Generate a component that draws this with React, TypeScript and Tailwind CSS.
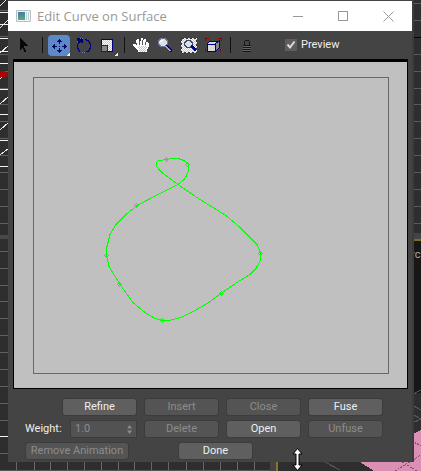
import type { ReactNode } from "react";

const leftLines = [10, 36, 54, 71, 88, 104, 121, 138, 155, 172, 189, 206, 223, 251, 268, 285, 301, 318, 335, 352, 369, 386, 403, 420, 453];
const whiteLines = [12, 24, 38, 51, 63, 89, 114, 140, 166, 436];
const rightLines = [3, 20, 54, 71, 88, 104, 121, 138, 155, 172, 189, 206, 223];
const bottomLines = [16, 34, 50, 67, 84, 101, 118, 134, 151, 168, 186, 203, 220, 237, 254];
const topLines = [17, 34, 50, 67, 84, 101, 118, 134, 151, 168, 185, 202, 219, 236, 253, 278, 295, 311, 328, 345, 362, 379, 396];

function Viewport() {
  return (
    <svg className="absolute inset-0 h-full w-full" viewBox="0 0 421 471" preserveAspectRatio="xMinYMin slice" shapeRendering="crispEdges" aria-hidden="true">
      <rect width="421" height="471" fill="#2e2e2e" />
      {topLines.map((x) => <rect key={x} x={x} width="1" height="1" fill="#555" />)}
      {leftLines.map((y) => <rect key={y} y={y} width="9" height="1" fill="#606060" />)}
      {whiteLines.map((y) => <rect key={y} y={y} width="9" height="1" fill="#f2f2f2" />)}
      <path d="M0 6 6 0M0 28 8 20M0 53 8 46M0 79 3 76M0 104 8 97M0 130 8 123M0 155 8 149" stroke="#e8e8e8" />
      <path d="M0 71h5v1h3v4H5v1H0z" fill="#b00000" />
      <rect y="235" width="9" height="4" fill="#484848" />
      {bottomLines.map((x) => <rect key={x} x={x} y="461" width="1" height="9" fill="#686868" />)}
      <rect y="470" width="270" height="1" fill="#555" />
      <rect x="270" y="461" width="6" height="10" fill="#444" />
      <rect x="276" y="461" width="2" height="10" fill="#8b742b" />
      {rightLines.map((y) => <rect key={y} x="412" y={y} width="9" height="1" fill="#5a5a5a" />)}
      <rect x="412" y="37" width="9" height="1" fill="#000" />
      <rect x="412" y="233" width="9" height="6" fill="#444" />
      <rect x="412" y="239" width="9" height="2" fill="#7f6a27" />
      <rect x="412" y="241" width="9" height="152" fill="#171717" />
      <text x="405" y="258" fontSize="11" fill="#aaa" fontFamily="Roboto, sans-serif">urc</text>
      <path d="M412 395l9-5M412 414l9 5M412 423l9-4M325 462l15 8M412 405l9 5" stroke="#555" />
      <path d="M421 430 360 462l14 9h47z" fill="#dc8fb4" />
      <path d="M395 471l26-16M402 462l15 9M412 441l9 5" stroke="#85536b" strokeDasharray="2 1" />
    </svg>
  );
}

function Icon({ children }: { children: ReactNode }) {
  return (
    <svg width="22" height="21" viewBox="0 0 22 21" shapeRendering="crispEdges" fill="none" aria-hidden="true">
      <defs>
        <pattern id="checker" width="2" height="2" patternUnits="userSpaceOnUse">
          <rect width="2" height="2" fill="#fff" />
          <path d="M0 0h1v1H0zM1 1h1v1H1z" fill="#c4c4c4" />
        </pattern>
      </defs>
      {children}
    </svg>
  );
}

function Tool({ label, active, children }: { label: string; active?: boolean; children: ReactNode }) {
  return (
    <button type="button" aria-label={label} aria-pressed={active} className={active ? "h-[21px] w-[22px] rounded-sm bg-[#5c89c7]" : "h-[21px] w-[22px] rounded-sm"}>
      <Icon>{children}</Icon>
    </button>
  );
}

function Divider() {
  return <span className="mr-[3px] ml-1 h-4 w-px bg-[#111]" />;
}

function Toolbar() {
  return (
    <div className="flex h-7 items-center gap-0.5 pl-1.5">
      <Tool label="Select">
        <path d="M6 3h1v1h1v1h1v1h1v1h1v1h1v1h1v1h1v1h-4v2h1v2h1v2h-2v-2H9v-2H8v1H7v1H6z" fill="#080808" />
      </Tool>
      <Divider />
      <Tool label="Move" active>
        <path d="M11 4h1v1h1v1h1v1h-2v2h-1V7H9V6h1V5h1zM11 18h1v-1h1v-1h1v-1h-2v-2h-1v2H9v1h1v1h1zM4 11v1h1v1h1v1h1v-2h2v-1H7V9H6v1H5v1zM19 11v1h-1v1h-1v1h-1v-2h-2v-1h2V9h1v1h1v1z" fill="#08085c" />
        <path d="M11 11h1v1h-1z" fill="#08085c" />
        <path d="M22 17v4h-4z" fill="#eee" />
      </Tool>
      <Tool label="Rotate">
        <path d="M5 3h6v5H9V7H8v1H7v1H6V7H5z" fill="#000070" />
        <path d="M6 9H5v4h1v2h1v1h1M13 4h1v1h2v1h1v2h1v5h-1v2h-1v1h-2" stroke="#000080" />
        <path d="M10 17h3M8 3h3M5 6v2" stroke="#6d7db5" strokeDasharray="1 1" />
      </Tool>
      <Tool label="Scale">
        <rect x="5.500" y="4.500" width="11" height="12" fill="url(#checker)" stroke="#000080" />
        <rect x="5.500" y="10.500" width="6" height="6" fill="#888" stroke="#800000" />
        <path d="M22 17v4h-4z" fill="#eee" />
      </Tool>
      <Divider />
      <Tool label="Pan">
        <path d="M7 4h2v2h2V3h2v2h1V4h2v3h2v1h1v4h-1v2h-1v3H8v-2H7v-1H6v-1H5v-1H4v-1H3V9h3v1h1V8H6V5h1z" fill="#fff" />
        <path d="M8 11h9v3h-1v3H9v-3H8z" fill="url(#checker)" />
        <path d="M9.500 6v4M12.500 5v5M15.500 7v3" stroke="#555" />
      </Tool>
      <Tool label="Zoom">
        <path d="M6 3h5v1h1v1h1v4h-1v1h-1v1H6v-1H5V9H4V5h1V4h1z" fill="#d8e0e8" stroke="#777799" />
        <path d="M6 7V6h1V5h2v1H8v1z" fill="#fff" />
        <path d="M12 11h1v1h1v1h1v1h1v1h1v1h1" stroke="#0000a8" strokeWidth="2" />
        <path d="M11 11h1v1h1v1h1v1h1v1h1v1" stroke="#aaa" />
      </Tool>
      <Tool label="Zoom region">
        <rect x="3" y="3" width="16" height="15" fill="url(#checker)" />
        <rect x="3.500" y="3.500" width="15" height="14" stroke="#333" strokeDasharray="2 2" />
        <path d="M8 5h4v1h1v1h1v3h-1v1h-1v1H8v-1H7v-1H6V7h1V6h1z" fill="#d8e0e8" stroke="#444466" />
        <path d="M13 11h1v1h1v1h1v1h1v1h1" stroke="#0000a0" strokeWidth="2" />
      </Tool>
      <Tool label="Frame all">
        <path d="M8 6h9v7l-3 3H5V9z" fill="#d8d8d8" stroke="#000080" />
        <path d="M13 9l4-3v7l-3 3z" fill="#888" stroke="#000080" />
        <path d="M5 9h9" stroke="#000080" />
        <path d="M3.500 6V3.500H7M16 3.500h3V6M3.500 14v3M18.500 14v3" stroke="#900000" />
      </Tool>
      <Divider />
      <Tool label="Lock">
        <path d="M8 6h1v4H8zM9 5h4v1H9zM13 6h1v4h-1z" fill="#181818" />
        <path d="M7 10h8v1H7zM7 12h8v1H7zM7 14h8v1H7zM7 16h8v1H7z" fill="#161616" />
        <path d="M7 11h8v1H7zM7 13h8v1H7zM7 15h8v1H7z" fill="#666" />
      </Tool>
      <label className="ml-[25px] flex items-center gap-1 text-[11px] leading-[18px] text-[#eee]">
        <span className="relative grid">
          <input type="checkbox" defaultChecked className="peer size-3 appearance-none bg-[#5d5d5d]" />
          <svg viewBox="0 0 12 12" className="pointer-events-none absolute inset-0 hidden size-3 peer-checked:block" fill="none" aria-hidden="true">
            <path d="M2.500 5.500 5 8.500 9.500 2.500" stroke="#ddd" strokeWidth="2" />
          </svg>
        </span>
        Preview
      </label>
    </div>
  );
}

const handles = [
  [166, 159], [187, 164], [136, 205], [106, 255], [119, 284], [162, 320], [221, 293], [260, 253],
];

function CurveCanvas() {
  return (
    <div className="mr-1 ml-[5px] border border-t-[3px] border-black bg-[#c0c0c0]">
      <svg className="block w-full" viewBox="14 62 393 326" fill="none" shapeRendering="crispEdges" role="img" aria-label="Curve">
        <rect x="33.500" y="77.500" width="355" height="296" stroke="#686868" />
        <path
          d="M178 184.500 163 173.500 159 169.500 156.500 166 156.500 163 158 161 166 159.500 172 158.500 178 158.500 184 160.500 188 163.500 188.500 171 186 176.500 184 179.500 178 184.500 160 193.500 137 205.500 126 214.500 116 224.500 110 234.500 107 246.500 106.500 256 109 266.500 120 284.500 133 302.500 145 312.500 155 318.500 163 320.500 169 320.500 181 317.500 195 310.500 209 302.500 221 293.500 240 280.500 250 274.500 256 268.500 260.500 260 260.500 253 257 244.500 253 240.500 240 227.500 226 215.500 200 199.500z"
          stroke="#00ff00"
        />
        {handles.map(([x, y]) => (
          <path
            key={`${x}-${y}`}
            d={`M${x - 2} ${y}h1v1h-1zm4 0h1v1h-1zm-3 -1h1v1h-1zm2 0h1v1h-1zm-2 2h1v1h-1zm2 0h1v1h-1zm-1 -3h1v1h-1zm0 4h1v1h-1z`}
            fill="#00ff00"
          />
        ))}
      </svg>
    </div>
  );
}

function Action({ label, disabled, className = "" }: { label: string; disabled?: boolean; className?: string }) {
  return (
    <button
      type="button"
      disabled={disabled}
      className={`h-4 rounded-xs bg-[#5f5f5f] text-[11px] leading-4 text-[#eee] outline outline-[#3c3c3c] disabled:bg-[#545454] disabled:text-[#8c8c8c] ${className}`}
    >
      {label}
    </button>
  );
}

export default function App() {
  return (
    <main className="relative min-h-screen overflow-hidden font-['Roboto',sans-serif]">
      <Viewport />
      <section className="relative mr-[9px] ml-2 bg-[#444] pt-px pb-[3px] shadow-[2px_0_0_#3c3c3c]">
        <header className="flex h-[30px] items-center bg-white text-[#999]">
          <svg className="ml-2 h-3 w-[15px]" viewBox="0 0 15 12" aria-hidden="true">
            <defs>
              <linearGradient id="pane" x2="0" y2="1">
                <stop stopColor="#4779aa" />
                <stop offset="1" stopColor="#60a878" />
              </linearGradient>
            </defs>
            <path d="M.5.5h14v11H.5z" fill="#f3f5f5" stroke="#b7c1c1" />
            <path d="M2 2h7v8H2z" fill="url(#pane)" />
            <path d="M10 2h1v8h-1zM12 2h1v8h-1z" fill="#b9d4d4" />
          </svg>
          <h1 className="ml-1.5 flex-1 font-['Open_Sans',sans-serif] text-[13px] leading-4">Edit Curve on Surface</h1>
          <div className="flex pr-px">
            <button type="button" aria-label="Minimize" className="grid h-[30px] w-[45px] place-items-center">
              <svg width="11" height="11" fill="none" stroke="currentColor" shapeRendering="crispEdges"><path d="M0 5.500h10" /></svg>
            </button>
            <button type="button" aria-label="Maximize" className="grid h-[30px] w-[45px] place-items-center">
              <svg width="11" height="11" fill="none" stroke="currentColor" shapeRendering="crispEdges"><path d="M.5.5h9v9h-9z" /></svg>
            </button>
            <button type="button" aria-label="Close window" className="grid h-[30px] w-[45px] place-items-center">
              <svg width="11" height="11" fill="none" stroke="currentColor"><path d="M.5.5l10 10M10.500.5l-10 10" /></svg>
            </button>
          </div>
        </header>
        <Toolbar />
        <CurveCanvas />
        <div className="flex flex-col gap-1.5 pt-2.5 pr-[30px] pl-4">
          <div className="grid grid-cols-4 gap-x-[9px] gap-y-1.5 pl-[39px]">
            <Action label="Refine" />
            <Action label="Insert" disabled />
            <Action label="Close" disabled />
            <Action label="Fuse" />
            <div className="-ml-[39px] flex h-4 items-center justify-between text-[11px] text-[#eee]">
              <label htmlFor="weight" className="pl-px leading-4">Weight:</label>
              <div className="flex h-4 w-[65px] items-center bg-[#525252] px-1 outline outline-[#3c3c3c]">
                <input id="weight" disabled defaultValue="1.0" className="h-4 w-full min-w-0 text-[11px] leading-4 text-[#8c8c8c]" />
                <svg className="shrink-0" width="5" height="9" viewBox="0 0 5 9" fill="#8a8a8a" aria-hidden="true"><path d="M0 3.500 2.500 0 5 3.500zM0 5.500 2.500 9 5 5.500z" /></svg>
              </div>
            </div>
            <Action label="Delete" disabled />
            <Action label="Open" />
            <Action label="Unfuse" disabled />
          </div>
          <div className="flex gap-[51px] pl-0.5">
            <Action label="Remove Animation" disabled className="w-[102px]" />
            <Action label="Done" className="w-[73px]" />
          </div>
        </div>
      </section>
      <svg className="pointer-events-none absolute top-[448px] left-[292px]" width="11" height="23" viewBox="0 0 11 23" aria-hidden="true">
        <path d="M5.500.5 10 6H7v11h3l-4.500 5.500L1 17h3V6H1z" fill="#fff" stroke="#000" />
      </svg>
    </main>
  );
}
